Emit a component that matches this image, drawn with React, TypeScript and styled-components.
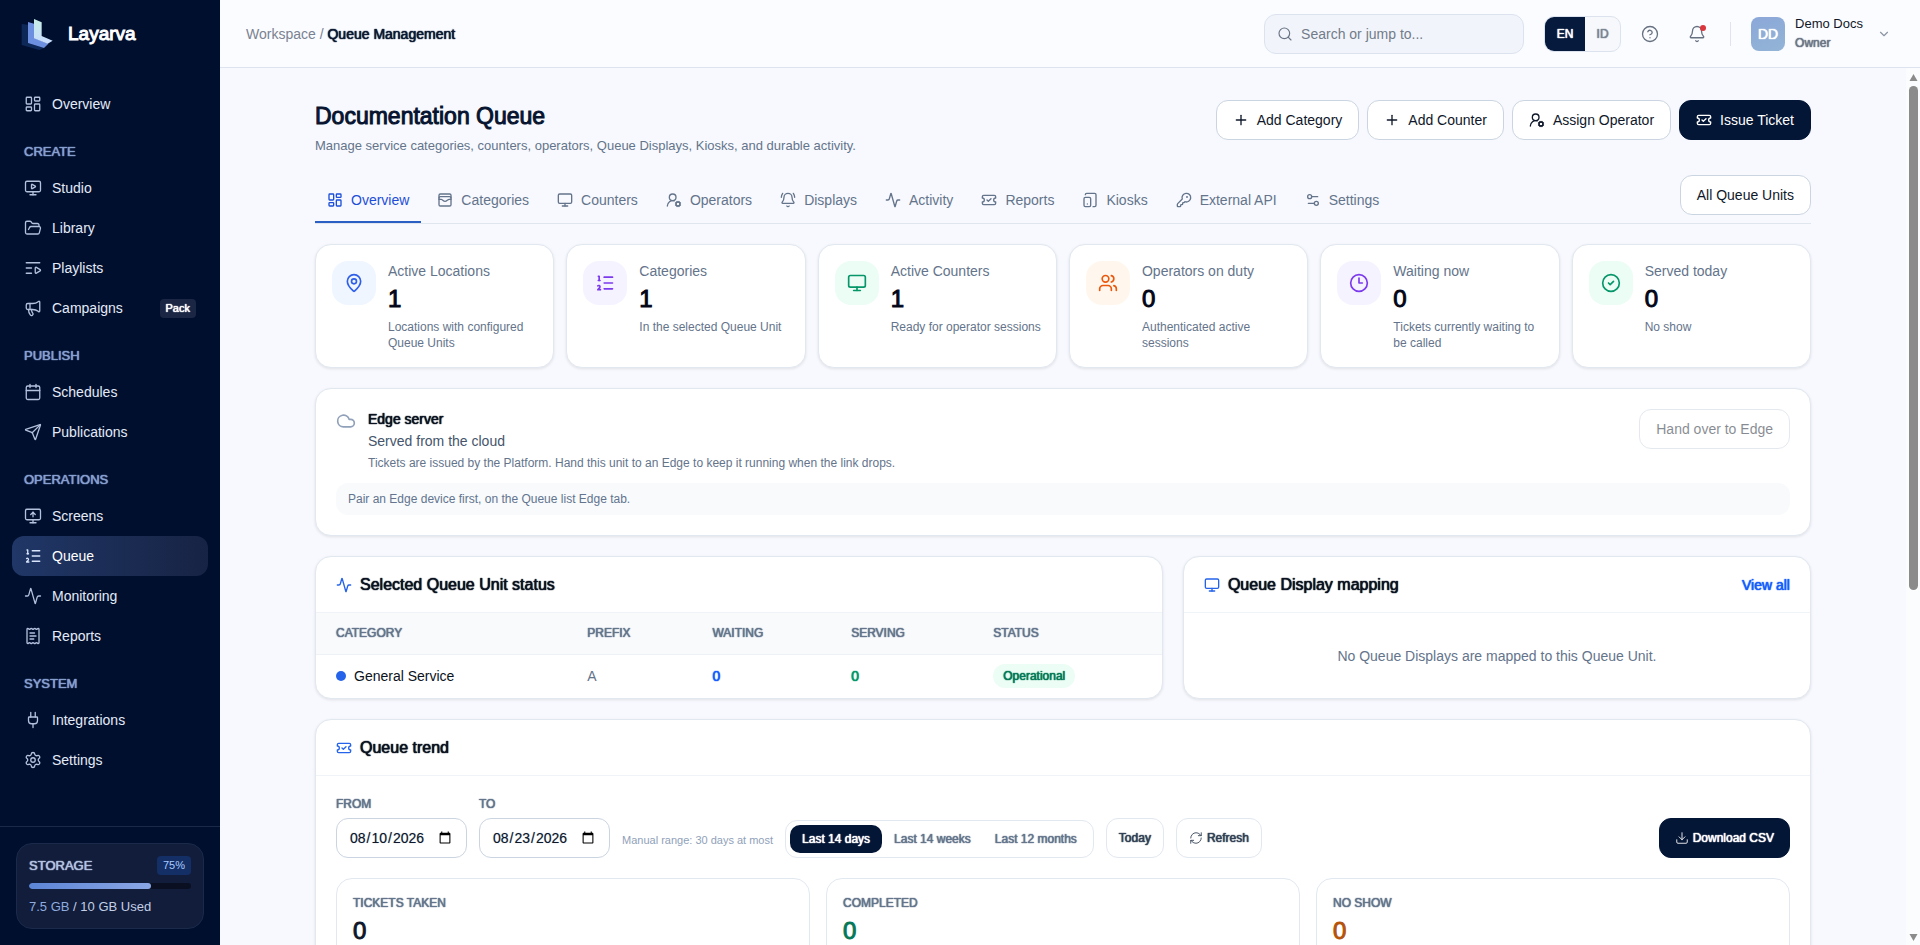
import React, { useState } from 'react';
import styled, { createGlobalStyle, css } from 'styled-components';
import {
  Activity, Bell, BellRing, Calendar, ChevronDown, CircleCheck, CircleHelp, Clock3, Cloud, Download, FolderOpen,
  KeyRound, LayoutDashboard, ListOrdered, ListVideo, MapPin, Megaphone, Monitor, MonitorPlay, MonitorUp, Plug, Plus,
  ReceiptText, RefreshCw, Search, Send, Settings, Settings2, TabletSmartphone, TicketCheck, UserRoundCog, Users,
  WalletCards, type LucideIcon,
} from 'lucide-react';

const GlobalStyle = createGlobalStyle`
  *, *::before, *::after { box-sizing: border-box; }
  body {
    margin: 0;
    font-family: "Liberation Sans", Arial, sans-serif;
    font-size: 14px;
    line-height: 20px;
    color: #0b1220;
    background: #f7f9fe;
  }
  h1, h2, p, ul { margin: 0; padding: 0; }
  ul { list-style: none; }
  a { color: inherit; text-decoration: none; }
  button, input { font: inherit; color: inherit; }
  button { cursor: pointer; }
  svg { flex: none; }
`;

/* Heavier text that keeps the advance widths of the regular face. */
const strong = css`
  font-weight: 400;
  text-shadow: 0 0 1px currentColor, 0 0 1px currentColor;
`;

const strongLarge = css`
  font-weight: 400;
  -webkit-text-stroke: 1px currentColor;
`;

/* ---------- Shell ---------- */

const Shell = styled.div`
  display: flex;
  height: 100vh;
  overflow: hidden;
`;

const Sidebar = styled.aside`
  display: flex;
  flex-direction: column;
  flex: none;
  width: 220px;
  background: #010f2e;
  color: #e3ebf8;
`;

const Brand = styled.a`
  display: flex;
  align-items: center;
  gap: 15px;
  height: 68px;
  padding-left: 21px;
  font-size: 19px;
  color: #fff;
  ${strongLarge}
`;

const Nav = styled.nav`
  flex: 1;
  min-height: 0;
  padding: 16px 12px 0;
  overflow: hidden;
`;

const NavHeading = styled.h2`
  padding: 20px 12px 8px;
  font-size: 13px;
  line-height: 16px;
  color: #869fcf;
  ${strong}
`;

const NavLink = styled.a<{ $active?: boolean }>`
  display: flex;
  align-items: center;
  gap: 10px;
  height: 40px;
  padding: 0 12px;
  border-radius: 12px;
  background: ${p => (p.$active ? 'linear-gradient(90deg, #203767, #172344)' : 'none')};
  color: ${p => (p.$active ? '#fff' : '#e3ebf8')};

  svg { color: ${p => (p.$active ? '#d9e5fb' : '#b3c1dd')}; }
`;

const PackTag = styled.span`
  margin-left: auto;
  padding: 1px 6px;
  border-radius: 4px;
  background: #1a2644;
  font-size: 11px;
  line-height: 17px;
  color: #fff;
  ${strong}
`;

const SidebarFooter = styled.div`
  padding: 16px;
  border-top: 1px solid #1a2947;
`;

const StorageCard = styled.section`
  display: grid;
  gap: 8px;
  padding: 12px;
  border: 1px solid #1b2a4b;
  border-radius: 16px;
  background: #111d3b;
  font-size: 13px;
  line-height: 19px;
`;

const StorageTop = styled.div`
  display: flex;
  align-items: center;
  justify-content: space-between;
  color: #b4c2e0;

  h2 { font-size: 13px; ${strong} }
`;

const StorageBadge = styled.span`
  padding: 0 6px;
  border-radius: 4px;
  background: #142f66;
  font-size: 11px;
  color: #a9cbff;
`;

const StorageTrack = styled.div`
  height: 6px;
  border-radius: 3px;
  background: #0a1021;
  overflow: hidden;
`;

const StorageFill = styled.div`
  height: 100%;
  border-radius: 3px;
  background: linear-gradient(90deg, #5c85d6, #8ba6e4);
`;

const StorageText = styled.p`
  color: #c3cfe6;
  span { color: #8fabdf; }
`;

const Workspace = styled.div`
  display: flex;
  flex-direction: column;
  flex: 1;
  min-width: 0;
`;

/* ---------- Top bar ---------- */

const TopBar = styled.header`
  display: flex;
  align-items: center;
  flex: none;
  height: 68px;
  padding: 0 29px 0 26px;
  border-bottom: 1px solid #dde4ef;
  background: #fbfcff;
`;

const Breadcrumb = styled.nav`
  flex: 1;
  color: #7a8291;
  strong { color: #0d1a33; ${strong} }
`;

const SearchBox = styled.label`
  display: flex;
  align-items: center;
  gap: 8px;
  width: 260px;
  height: 40px;
  padding: 0 12px;
  border: 1px solid #dce3ee;
  border-radius: 12px;
  background: #f1f5fb;
  color: #6b7484;

  input {
    flex: 1;
    min-width: 0;
    padding: 0;
    border: 0;
    outline: 0;
    background: none;
  }
  input::placeholder { color: #737b89; opacity: 1; }
`;

const LanguageSwitch = styled.div`
  display: flex;
  width: 77px;
  height: 36px;
  margin-left: 20px;
  border: 1px solid #dce3ee;
  border-radius: 10px;
  background: #f6f8fb;
  overflow: hidden;
`;

const LanguageButton = styled.button<{ $active?: boolean }>`
  flex: ${p => (p.$active ? '0 0 40px' : '1')};
  padding: 0;
  border: 0;
  background: ${p => (p.$active ? '#051a3c' : 'transparent')};
  font-size: 12px;
  color: ${p => (p.$active ? '#fff' : '#7b8494')};
  ${strong}
`;

const IconButton = styled.button`
  position: relative;
  display: grid;
  place-items: center;
  width: 36px;
  height: 36px;
  margin-left: 11px;
  padding: 0;
  border: 0;
  background: none;
  color: #66707f;
`;

const AlertDot = styled.span`
  position: absolute;
  top: 9px;
  right: 9px;
  width: 6px;
  height: 6px;
  border-radius: 50%;
  background: #d9363e;
`;

const Divider = styled.span`
  width: 1px;
  height: 24px;
  margin: 0 20px 0 15px;
  background: #dfe5ee;
`;

const UserMenu = styled.button`
  display: flex;
  align-items: center;
  gap: 10px;
  padding: 0;
  border: 0;
  background: none;
  text-align: left;

  > svg { margin-left: 4px; color: #8d96a5; }
`;

const Avatar = styled.span`
  display: grid;
  place-items: center;
  width: 34px;
  height: 34px;
  border-radius: 8px;
  background: linear-gradient(160deg, #8ba7d8, #93b5d6);
  color: #fff;
  ${strong}
`;

const UserName = styled.span`
  display: block;
  font-size: 13px;
  line-height: 18px;
  color: #101828;
`;

const UserRole = styled.span`
  display: block;
  font-size: 12px;
  line-height: 20px;
  color: #6d7686;
  ${strong}
`;

/* ---------- Page ---------- */

const Body = styled.div`
  display: flex;
  flex: 1;
  min-height: 0;
`;

const Main = styled.main`
  flex: 1;
  min-width: 0;
  padding: 32px 32px 0;
  overflow-y: auto;
  scrollbar-width: none;
`;

const Content = styled.div`
  display: grid;
  gap: 20px;
  max-width: 1496px;
  margin: 0 auto;
`;

const ScrollRail = styled.div`
  display: flex;
  flex-direction: column;
  align-items: center;
  flex: none;
  width: 14px;
  padding: 5px 0 3px;
  background: #fbfcfd;
  color: #8b8b8b;
`;

const ScrollThumb = styled.div`
  width: 9px;
  height: 58%;
  margin: 4px 0 auto;
  border-radius: 5px;
  background: #8b8b8b;
`;

const PageHead = styled.div`
  display: flex;
  align-items: flex-start;
  justify-content: space-between;
  gap: 24px;
  height: 55px;
`;

const Title = styled.h1`
  font-size: 23px;
  line-height: 32px;
  color: #07142f;
  ${strongLarge}
`;

const Subtitle = styled.p`
  margin-top: 4px;
  font-size: 13px;
  color: #64748b;
`;

const Actions = styled.div`
  display: flex;
  gap: 8px;
`;

const Button = styled.button<{ $primary?: boolean }>`
  display: inline-flex;
  align-items: center;
  justify-content: center;
  gap: 8px;
  flex: none;
  height: 40px;
  padding: 0 16px;
  border: 1px solid ${p => (p.$primary ? '#041636' : '#cbd5e1')};
  border-radius: 12px;
  background: ${p => (p.$primary ? '#041636' : '#fff')};
  color: ${p => (p.$primary ? '#fff' : '#0f172a')};
  white-space: nowrap;

  &:disabled { opacity: 0.5; cursor: default; }
`;

const SmallButton = styled(Button)`
  gap: 4px;
  padding: 0 ${p => (p.$primary ? '15px' : '12px')};
  border-color: ${p => (p.$primary ? '#041636' : '#e2e8f0')};
  font-size: 12px;
  color: ${p => (p.$primary ? '#fff' : '#334155')};
  ${strong}
`;

const TabBar = styled.div`
  display: flex;
  align-items: flex-end;
  justify-content: space-between;
  border-bottom: 1px solid #e0e6ee;

  > button { margin-bottom: 8px; }
`;

const Tabs = styled.nav`
  display: flex;
  gap: 4px;
`;

const Tab = styled.a<{ $active?: boolean }>`
  display: flex;
  align-items: center;
  gap: 8px;
  height: 44px;
  padding: 0 12px;
  border-bottom: 2px solid ${p => (p.$active ? '#2b5fc4' : 'transparent')};
  color: ${p => (p.$active ? '#1d4ed8' : '#64748b')};
`;

const card = css`
  border: 1px solid #e2e8f0;
  border-radius: 16px;
  background: #fff;
  box-shadow: 0 1px 3px rgba(15, 23, 42, 0.1);
`;

const StatGrid = styled.ul`
  display: grid;
  grid-template-columns: repeat(6, 1fr);
  gap: 12px;
`;

const StatCard = styled.li`
  display: flex;
  gap: 12px;
  padding: 16px 12px 16px 16px;
  ${card}
`;

const StatIcon = styled.span<{ $bg: string; $fg: string }>`
  display: grid;
  place-items: center;
  flex: none;
  width: 44px;
  height: 44px;
  border-radius: 16px;
  background: ${p => p.$bg};
  color: ${p => p.$fg};
`;

const Muted = styled.p`
  color: #64748b;
`;

const Value = styled.p<{ $color?: string }>`
  margin-top: 2px;
  font-size: 24px;
  line-height: 32px;
  color: ${p => p.$color ?? '#020617'};
  ${strongLarge}
`;

const Note = styled.p`
  margin-top: 4px;
  font-size: 12px;
  line-height: 16px;
  color: #64748b;
`;

const EdgeCard = styled.section`
  display: grid;
  gap: 12px;
  padding: 20px;
  ${card}
`;

const EdgeTop = styled.div`
  display: flex;
  align-items: flex-start;
  gap: 12px;

  > svg { margin-top: 2px; color: #90a1b9; }
  > div { flex: 1; }
  h2 { font-size: 14px; ${strong} }
`;

const EdgeState = styled.p`
  margin-top: 2px;
  color: #45556c;
`;

const Hint = styled.p`
  padding: 8px 12px;
  border-radius: 12px;
  background: #f8fafc;
  font-size: 12px;
  line-height: 16px;
  color: #62748e;
`;

const Split = styled.div`
  display: grid;
  grid-template-columns: 135fr 100fr;
  gap: 20px;
`;

const Panel = styled.section`
  display: flex;
  flex-direction: column;
  min-width: 0;
  overflow: hidden;
  ${card}
`;

const PanelHead = styled.div`
  display: flex;
  align-items: center;
  gap: 8px;
  height: 56px;
  padding: 0 20px;
  border-bottom: 1px solid #f0f3f7;

  svg { color: #2563eb; }
  h2 { font-size: 16px; line-height: 24px; ${strong} }
  a { margin-left: auto; color: #155dfc; ${strong} }
`;

const Table = styled.table`
  width: 100%;
  table-layout: fixed;
  border-collapse: collapse;
  text-align: left;

  th, td { padding: 0 20px; }
  th {
    height: 41px;
    border-bottom: 1px solid #eef2f6;
    background: #f8fafc;
    font-size: 12px;
    color: #64748b;
    ${strong}
  }
  td { height: 44px; }
`;

const Column = styled.col<{ $share: number }>`
  width: ${p => p.$share}%;
`;

const CategoryName = styled.span`
  display: flex;
  align-items: center;
  gap: 8px;

  &::before {
    content: '';
    width: 10px;
    height: 10px;
    border-radius: 50%;
    background: #2563eb;
  }
`;

const Count = styled.span<{ $color: string }>`
  color: ${p => p.$color};
  ${strong}
`;

const Pill = styled.span`
  display: inline-block;
  padding: 4px 10px;
  border-radius: 12px;
  background: #ecfdf5;
  font-size: 12px;
  line-height: 16px;
  color: #047857;
  ${strong}
`;

const Empty = styled.p`
  display: grid;
  place-items: center;
  flex: 1;
  color: #64748b;
`;

const PanelBody = styled.div`
  display: grid;
  gap: 20px;
  padding: 20px;
`;

const Filters = styled.div`
  display: flex;
  align-items: flex-end;
  gap: 12px;

  > :last-child { margin-left: auto; }
`;

const DateField = styled.label`
  display: grid;
  gap: 6px;
  font-size: 12px;
  line-height: 16px;
  color: #64748b;
  ${strong}

  input {
    width: 131px;
    height: 40px;
    padding: 0 12px;
    border: 1px solid #cbd5e1;
    border-radius: 12px;
    background: #fff;
    font-size: 14px;
    color: #0f172a;
    text-shadow: 0 0 1px #94a3b8;
  }
`;

const RangeNote = styled.p`
  padding-bottom: 10px;
  font-size: 11px;
  line-height: 16px;
  color: #90a1b9;
`;

const Segmented = styled.div`
  display: flex;
  padding: 4px;
  border: 1px solid #e2e8f0;
  border-radius: 12px;
`;

const Segment = styled.button<{ $active?: boolean }>`
  padding: 6px 12px;
  border: 0;
  border-radius: 10px;
  background: ${p => (p.$active ? '#041636' : 'transparent')};
  font-size: 12px;
  line-height: 16px;
  color: ${p => (p.$active ? '#fff' : '#64748b')};
  ${strong}
`;

const Totals = styled.ul`
  display: grid;
  grid-template-columns: repeat(3, 1fr);
  gap: 16px;
`;

const Total = styled.li`
  display: grid;
  gap: 2px;
  padding: 16px;
  border: 1px solid #e2e8f0;
  border-radius: 16px;
`;

const TotalLabel = styled.p`
  font-size: 12px;
  line-height: 16px;
  color: #64748b;
  ${strong}
`;

/* ---------- Data ---------- */

type NavItem = { label: string; icon: LucideIcon; tag?: string };

const navGroups: { heading?: string; items: NavItem[] }[] = [
  { items: [{ label: 'Overview', icon: LayoutDashboard }] },
  {
    heading: 'CREATE',
    items: [
      { label: 'Studio', icon: MonitorPlay },
      { label: 'Library', icon: FolderOpen },
      { label: 'Playlists', icon: ListVideo },
      { label: 'Campaigns', icon: Megaphone, tag: 'Pack' },
    ],
  },
  {
    heading: 'PUBLISH',
    items: [
      { label: 'Schedules', icon: Calendar },
      { label: 'Publications', icon: Send },
    ],
  },
  {
    heading: 'OPERATIONS',
    items: [
      { label: 'Screens', icon: MonitorUp },
      { label: 'Queue', icon: ListOrdered },
      { label: 'Monitoring', icon: Activity },
      { label: 'Reports', icon: ReceiptText },
    ],
  },
  {
    heading: 'SYSTEM',
    items: [
      { label: 'Integrations', icon: Plug },
      { label: 'Settings', icon: Settings },
    ],
  },
];

const tabs: NavItem[] = [
  { label: 'Overview', icon: LayoutDashboard },
  { label: 'Categories', icon: WalletCards },
  { label: 'Counters', icon: Monitor },
  { label: 'Operators', icon: UserRoundCog },
  { label: 'Displays', icon: BellRing },
  { label: 'Activity', icon: Activity },
  { label: 'Reports', icon: TicketCheck },
  { label: 'Kiosks', icon: TabletSmartphone },
  { label: 'External API', icon: KeyRound },
  { label: 'Settings', icon: Settings2 },
];

const stats = [
  { label: 'Active Locations', value: 1, note: 'Locations with configured Queue Units', icon: MapPin, bg: '#eff6ff', fg: '#2f5fe8' },
  { label: 'Categories', value: 1, note: 'In the selected Queue Unit', icon: ListOrdered, bg: '#f5f3ff', fg: '#7c3aed' },
  { label: 'Active Counters', value: 1, note: 'Ready for operator sessions', icon: Monitor, bg: '#ecfdf5', fg: '#059669' },
  { label: 'Operators on duty', value: 0, note: 'Authenticated active sessions', icon: Users, bg: '#fff7ed', fg: '#ea580c' },
  { label: 'Waiting now', value: 0, note: 'Tickets currently waiting to be called', icon: Clock3, bg: '#f5f3ff', fg: '#7c3aed' },
  { label: 'Served today', value: 0, note: 'No show', icon: CircleCheck, bg: '#ecfdf5', fg: '#059669' },
];

const columns = [
  { label: 'CATEGORY', share: 29.7 },
  { label: 'PREFIX', share: 14.8 },
  { label: 'WAITING', share: 16.4 },
  { label: 'SERVING', share: 16.8 },
  { label: 'STATUS', share: 22.3 },
];

const ranges = ['Last 14 days', 'Last 14 weeks', 'Last 12 months'];

const totals = [
  { label: 'TICKETS TAKEN', value: 0, color: '#0f172a' },
  { label: 'COMPLETED', value: 0, color: '#047857' },
  { label: 'NO SHOW', value: 0, color: '#b45309' },
];

const Logo = () => (
  <svg width="32" height="32" viewBox="0 0 96 96" aria-hidden="true">
    <defs>
      <linearGradient id="logoFront" x1="0" y1="0" x2="0" y2="1">
        <stop offset="0" stopColor="#c6eee6" />
        <stop offset="1" stopColor="#c9dcff" />
      </linearGradient>
    </defs>
    <polygon points="2,18 21,20 21,75 69,90 55,96 2,81" fill="#0d2757" />
    <polygon points="21,12 39,17 39,59 82,77 69,90 21,75" fill="#6d8fe0" />
    <polygon points="39,3 62,13 62,54 95,68 80,77 39,61" fill="url(#logoFront)" />
  </svg>
);

export default function App() {
  const [range, setRange] = useState(ranges[0]);
  const [from, setFrom] = useState('2026-08-10');
  const [to, setTo] = useState('2026-08-23');

  return (
    <>
      <GlobalStyle />
      <Shell>
        <Sidebar>
          <Brand href="#"><Logo />Layarva</Brand>
          <Nav aria-label="Main">
            {navGroups.map(group => (
              <section key={group.heading ?? 'top'}>
                {group.heading && <NavHeading>{group.heading}</NavHeading>}
                {group.items.map(({ label, icon: Icon, tag }) => (
                  <NavLink key={label} href="#" $active={label === 'Queue'}>
                    <Icon size={18} strokeWidth={1.75} />
                    {label}
                    {tag && <PackTag>{tag}</PackTag>}
                  </NavLink>
                ))}
              </section>
            ))}
          </Nav>
          <SidebarFooter>
            <StorageCard>
              <StorageTop><h2>STORAGE</h2><StorageBadge>75%</StorageBadge></StorageTop>
              <StorageTrack><StorageFill style={{ width: '75%' }} /></StorageTrack>
              <StorageText><span>7.5 GB</span> / 10 GB Used</StorageText>
            </StorageCard>
          </SidebarFooter>
        </Sidebar>

        <Workspace>
          <TopBar>
            <Breadcrumb aria-label="Breadcrumb"><a href="#">Workspace</a> / <strong>Queue Management</strong></Breadcrumb>
            <SearchBox>
              <Search size={16} strokeWidth={1.75} />
              <input type="search" placeholder="Search or jump to..." aria-label="Search" />
            </SearchBox>
            <LanguageSwitch>
              <LanguageButton $active>EN</LanguageButton>
              <LanguageButton>ID</LanguageButton>
            </LanguageSwitch>
            <IconButton aria-label="Help"><CircleHelp size={18} strokeWidth={1.75} /></IconButton>
            <IconButton aria-label="Notifications"><Bell size={18} strokeWidth={1.75} /><AlertDot /></IconButton>
            <Divider />
            <UserMenu>
              <Avatar>DD</Avatar>
              <span><UserName>Demo Docs</UserName><UserRole>Owner</UserRole></span>
              <ChevronDown size={14} />
            </UserMenu>
          </TopBar>

          <Body>
            <Main>
              <Content>
                <PageHead>
                  <div>
                    <Title>Documentation Queue</Title>
                    <Subtitle>Manage service categories, counters, operators, Queue Displays, Kiosks, and durable activity.</Subtitle>
                  </div>
                  <Actions>
                    <Button><Plus size={16} />Add Category</Button>
                    <Button><Plus size={16} />Add Counter</Button>
                    <Button><UserRoundCog size={16} />Assign Operator</Button>
                    <Button $primary><TicketCheck size={16} />Issue Ticket</Button>
                  </Actions>
                </PageHead>

                <TabBar>
                  <Tabs aria-label="Queue sections">
                    {tabs.map(({ label, icon: Icon }, i) => (
                      <Tab key={label} href="#" $active={i === 0}><Icon size={16} />{label}</Tab>
                    ))}
                  </Tabs>
                  <Button>All Queue Units</Button>
                </TabBar>

                <StatGrid>
                  {stats.map(({ label, value, note, icon: Icon, bg, fg }) => (
                    <StatCard key={label}>
                      <StatIcon $bg={bg} $fg={fg}><Icon size={20} /></StatIcon>
                      <div>
                        <Muted>{label}</Muted>
                        <Value>{value}</Value>
                        <Note>{note}</Note>
                      </div>
                    </StatCard>
                  ))}
                </StatGrid>

                <EdgeCard>
                  <EdgeTop>
                    <Cloud size={20} />
                    <div>
                      <h2>Edge server</h2>
                      <EdgeState>Served from the cloud</EdgeState>
                      <Note>Tickets are issued by the Platform. Hand this unit to an Edge to keep it running when the link drops.</Note>
                    </div>
                    <Button disabled>Hand over to Edge</Button>
                  </EdgeTop>
                  <Hint>Pair an Edge device first, on the Queue list Edge tab.</Hint>
                </EdgeCard>

                <Split>
                  <Panel>
                    <PanelHead><Activity size={16} /><h2>Selected Queue Unit status</h2></PanelHead>
                    <Table>
                      <colgroup>
                        {columns.map(c => <Column key={c.label} $share={c.share} />)}
                      </colgroup>
                      <thead>
                        <tr>{columns.map(c => <th key={c.label} scope="col">{c.label}</th>)}</tr>
                      </thead>
                      <tbody>
                        <tr>
                          <td><CategoryName>General Service</CategoryName></td>
                          <td><Muted as="span">A</Muted></td>
                          <td><Count $color="#155dfc">0</Count></td>
                          <td><Count $color="#059669">0</Count></td>
                          <td><Pill>Operational</Pill></td>
                        </tr>
                      </tbody>
                    </Table>
                  </Panel>
                  <Panel>
                    <PanelHead><Monitor size={16} /><h2>Queue Display mapping</h2><a href="#">View all</a></PanelHead>
                    <Empty>No Queue Displays are mapped to this Queue Unit.</Empty>
                  </Panel>
                </Split>

                <Panel>
                  <PanelHead><TicketCheck size={16} /><h2>Queue trend</h2></PanelHead>
                  <PanelBody>
                    <Filters>
                      <DateField>FROM<input type="date" value={from} onChange={e => setFrom(e.target.value)} /></DateField>
                      <DateField>TO<input type="date" value={to} onChange={e => setTo(e.target.value)} /></DateField>
                      <RangeNote>Manual range: 30 days at most</RangeNote>
                      <Segmented>
                        {ranges.map(r => (
                          <Segment key={r} $active={r === range} onClick={() => setRange(r)}>{r}</Segment>
                        ))}
                      </Segmented>
                      <SmallButton>Today</SmallButton>
                      <SmallButton><RefreshCw size={14} strokeWidth={1.5} />Refresh</SmallButton>
                      <SmallButton $primary><Download size={14} strokeWidth={1.5} />Download CSV</SmallButton>
                    </Filters>
                    <Totals>
                      {totals.map(t => (
                        <Total key={t.label}>
                          <TotalLabel>{t.label}</TotalLabel>
                          <Value $color={t.color}>{t.value}</Value>
                        </Total>
                      ))}
                    </Totals>
                  </PanelBody>
                </Panel>
              </Content>
            </Main>
            <ScrollRail aria-hidden="true">
              <svg width="9" height="9" viewBox="0 0 9 9"><path d="M4.5 1 8.5 8H.5z" fill="currentColor" /></svg>
              <ScrollThumb />
              <svg width="9" height="9" viewBox="0 0 9 9"><path d="M4.5 8 .5 1h8z" fill="currentColor" /></svg>
            </ScrollRail>
          </Body>
        </Workspace>
      </Shell>
    </>
  );
}
